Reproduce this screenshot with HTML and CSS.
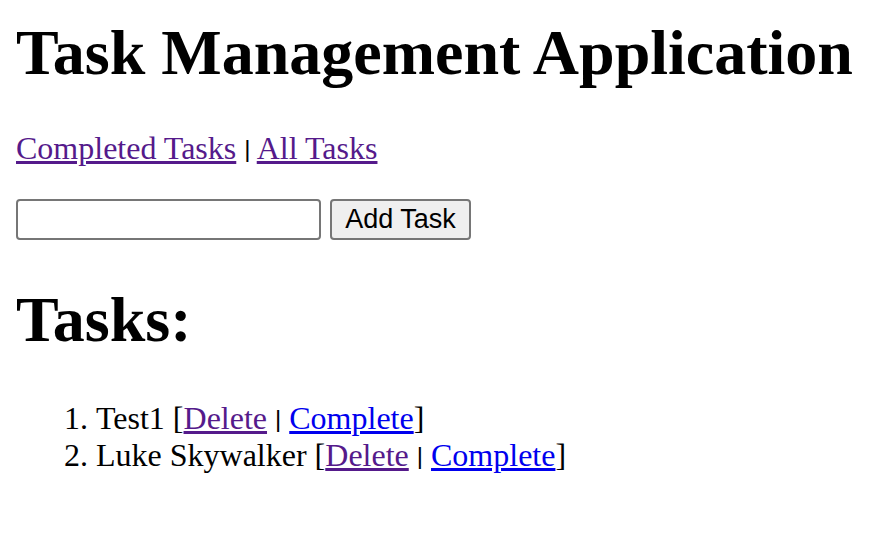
FILE: index.html
```html
<!DOCTYPE html>
<html>
<head>
<meta charset="utf-8">
<link rel="stylesheet" href="styles.css">
</head>
<body>
<h1 class="title title-first">Task Management Application</h1>
<p class="nav"><a class="visited" href="#">Completed Tasks</a> <span class="sep">|</span> <a class="visited" href="#">All Tasks</a></p>
<form class="add-form">
<input class="task-input" type="text"> <button class="add-btn" type="button">Add Task</button>
</form>
<h1 class="title">Tasks:</h1>
<ol class="tasks">
<li>Test1 [<a class="visited" href="#">Delete</a> <span class="sep">|</span> <a class="link" href="#">Complete</a>]</li>
<li>Luke Skywalker [<a class="visited" href="#">Delete</a> <span class="sep">|</span> <a class="link" href="#">Complete</a>]</li>
</ol>
</body>
</html>
```
FILE: styles.css
```css
html, body {
  background: #fff;
}
body {
  margin: 16px;
  font-family: "Liberation Serif", serif;
  font-size: 32px;
  color: #000;
}
.title {
  font-size: 64px;
  font-weight: bold;
  margin: 43px 0;
  line-height: normal;
}
.title-first {
  margin-top: 0;
  margin-bottom: 40px;
}
.nav {
  margin: 32px 0;
}
.sep {
  font-family: "Liberation Sans", sans-serif;
  font-size: 24px;
  vertical-align: 2px;
}
.visited {
  color: #551A8B;
}
.link {
  color: #0000EE;
}
.add-form {
  margin: 0;
  display: flex;
  align-items: center;
  gap: 9px;
}
.task-input {
  box-sizing: border-box;
  width: 305px;
  height: 41px;
  border: 2px solid #767676;
  border-radius: 4px;
  padding: 2px 4px;
  font-size: 26px;
  margin: 0;
}
.add-btn {
  box-sizing: border-box;
  height: 41px;
  width: 141px;
  border: 2px solid #767676;
  border-radius: 4px;
  background: #efefef;
  font-family: "Liberation Sans", sans-serif;
  font-size: 27px;
  color: #000;
  padding: 0 12px;
  margin: 0;
}
.tasks {
  margin: 32px 0;
  padding-left: 80px;
}
```
